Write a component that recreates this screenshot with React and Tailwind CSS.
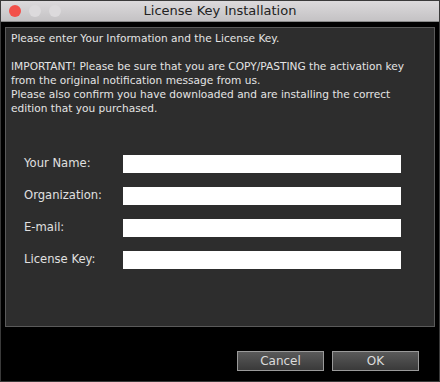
export default function App() {
  const fields = ["Your Name:", "Organization:", "E-mail:", "License Key:"];

  return (
    <div className="w-[440px] h-[382px] bg-black border border-[#3a3a3a] flex flex-col overflow-hidden"
      style={{ fontFamily: '"DejaVu Sans", "Liberation Sans", sans-serif' }}>
      {/* Title bar */}
      <div className="relative h-[21px] flex items-center bg-gradient-to-b from-[#dcdadc] to-[#c4c2c4] border-b border-[#8a8a8a] flex-shrink-0">
        <div className="flex items-center gap-[8px] pl-[8px]">
          <span className="w-[12px] h-[12px] rounded-full bg-[#f2504a]" />
          <span className="w-[12px] h-[12px] rounded-full bg-[#dcdadc]" />
          <span className="w-[12px] h-[12px] rounded-full bg-[#dcdadc]" />
        </div>
        <div className="absolute inset-0 flex items-center justify-center text-[13px] text-[#222]">
          License Key Installation
        </div>
      </div>

      {/* Panel */}
      <div className="mt-[5px] mx-[4px] h-[300px] bg-[#2d2d2d] border border-[#5a5a5a] flex flex-col">
        <div className="pl-[5px] pt-[3px] text-[10.6px] leading-[14px] text-[#e4e4e4]">
          <p>Please enter Your Information and the License Key.</p>
          <p className="mt-[14px]">IMPORTANT! Please be sure that you are COPY/PASTING the activation key</p>
          <p>from the original notification message from us.</p>
          <p>Please also confirm you have downloaded and are installing the correct</p>
          <p>edition that you purchased.</p>
        </div>

        <div className="mt-[40px] flex flex-col gap-[14px]">
          {fields.map(f => (
            <div key={f} className="flex items-center h-[18px]">
              <span className="w-[117px] pl-[18px] text-[11.6px] text-[#e0e0e0]">{f}</span>
              <div className="w-[278px] h-[18px] bg-white" />
            </div>
          ))}
        </div>
      </div>

      {/* Buttons */}
      <div className="flex justify-end gap-[8px] pr-[20px] mt-[24px]">
        <button className="w-[87px] h-[20px] bg-gradient-to-b from-[#5a5a5a] to-[#3a3a3a] border border-[#9a9a9a] text-[12px] text-[#dcdcdc]">
          Cancel
        </button>
        <button className="w-[87px] h-[20px] bg-gradient-to-b from-[#5a5a5a] to-[#3a3a3a] border border-[#9a9a9a] text-[12px] text-[#dcdcdc]">
          OK
        </button>
      </div>
    </div>
  );
}
